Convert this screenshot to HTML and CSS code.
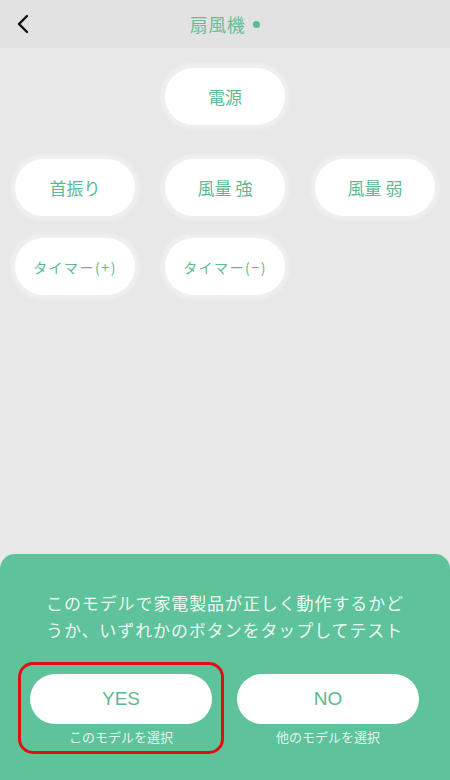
FILE: index.html
```html
<!DOCTYPE html>
<html lang="ja">
<head>
  <meta charset="UTF-8">
  <meta name="viewport" content="width=device-width, initial-scale=1.0">
  <title>扇風機</title>
  <link rel="stylesheet" href="styles.css">
</head>
<body>
  <div class="screen">
    <header class="topbar">
      <button class="back" aria-label="戻る">
        <svg width="14" height="20" viewBox="0 0 14 20">
          <path d="M11 2 L3 10 L11 18" fill="none" stroke="#111" stroke-width="2.4" stroke-linecap="round" stroke-linejoin="round"/>
        </svg>
      </button>
      <div class="title">扇風機<span class="status-dot"></span></div>
      <div></div>
    </header>

    <main class="remote">
      <div class="power-row">
        <button class="key">電源</button>
      </div>
      <div class="key-grid">
        <button class="key">首振り</button>
        <button class="key">風量 強</button>
        <button class="key">風量 弱</button>
        <button class="key small">タイマー(+)</button>
        <button class="key small">タイマー(−)</button>
      </div>
    </main>

    <section class="test-panel">
      <p class="test-text">このモデルで家電製品が正しく動作するかどうか、いずれかのボタンをタップしてテスト</p>
      <div class="choices">
        <div class="choice selected">
          <button class="choice-btn">YES</button>
          <span class="choice-label">このモデルを選択</span>
        </div>
        <div class="choice">
          <button class="choice-btn">NO</button>
          <span class="choice-label">他のモデルを選択</span>
        </div>
      </div>
    </section>
  </div>
</body>
</html>
```

FILE: styles.css
```css
body {
  margin: 0;
  background-color: #e8e8e8;
  font-family: 'Noto Sans CJK JP', 'Noto Sans', sans-serif;
}

.screen {
  width: 450px;
  height: 780px;
  display: flex;
  flex-direction: column;
  overflow: hidden;
}

.topbar {
  height: 48px;
  background-color: #e2e2e2;
  display: grid;
  grid-template-columns: 60px 1fr 60px;
  align-items: center;
}

.back {
  border: none;
  background: none;
  padding: 0 0 0 16px;
  height: 48px;
  display: flex;
  align-items: center;
  cursor: pointer;
}

.title {
  text-align: center;
  font-size: 18px;
  letter-spacing: 0.5px;
  color: #62bf98;
  display: flex;
  justify-content: center;
  align-items: center;
}

.status-dot {
  width: 7px;
  height: 7px;
  border-radius: 50%;
  background-color: #5cbd94;
  margin-left: 8px;
}

.remote {
  flex: 1;
  padding: 20px 15px 0;
}

.power-row {
  display: flex;
  justify-content: center;
}

.key-grid {
  margin-top: 34px;
  display: grid;
  grid-template-columns: repeat(3, 120px);
  column-gap: 30px;
  row-gap: 22px;
}

.key {
  width: 120px;
  height: 57px;
  border: none;
  border-radius: 29px;
  background-color: #fff;
  color: #5cba93;
  font-family: inherit;
  font-size: 17px;
  box-shadow: 0 0 3px 5px rgba(255, 255, 255, 0.3);
  cursor: pointer;
}

.key.small {
  font-size: 14px;
  letter-spacing: 1.5px;
  padding: 0;
}

.test-panel {
  height: 226px;
  box-sizing: border-box;
  background-color: #5ec39b;
  border-radius: 15px 15px 0 0;
  padding: 35px 19px 0 18px;
}

.test-text {
  margin: 0 16px 19px 28px;
  font-size: 17px;
  line-height: 27px;
  letter-spacing: 0.9px;
  color: rgba(255, 255, 255, 0.92);
}

.choices {
  display: grid;
  grid-template-columns: 206px 206px;
  column-gap: 1px;
}

.choice {
  display: flex;
  flex-direction: column;
  align-items: center;
  padding: 9px 9px 5px;
  border: 3px solid transparent;
  border-radius: 15px;
}

.choice.selected {
  border-color: #e01010;
}

.choice-btn {
  width: 182px;
  height: 50px;
  border: none;
  border-radius: 25px;
  background-color: #fff;
  color: #5cb894;
  font-family: 'Liberation Sans', Arial, sans-serif;
  font-size: 19px;
  cursor: pointer;
}

.choice-label {
  margin-top: 4px;
  font-size: 13px;
  line-height: 18px;
  color: rgba(255, 255, 255, 0.85);
}
```
